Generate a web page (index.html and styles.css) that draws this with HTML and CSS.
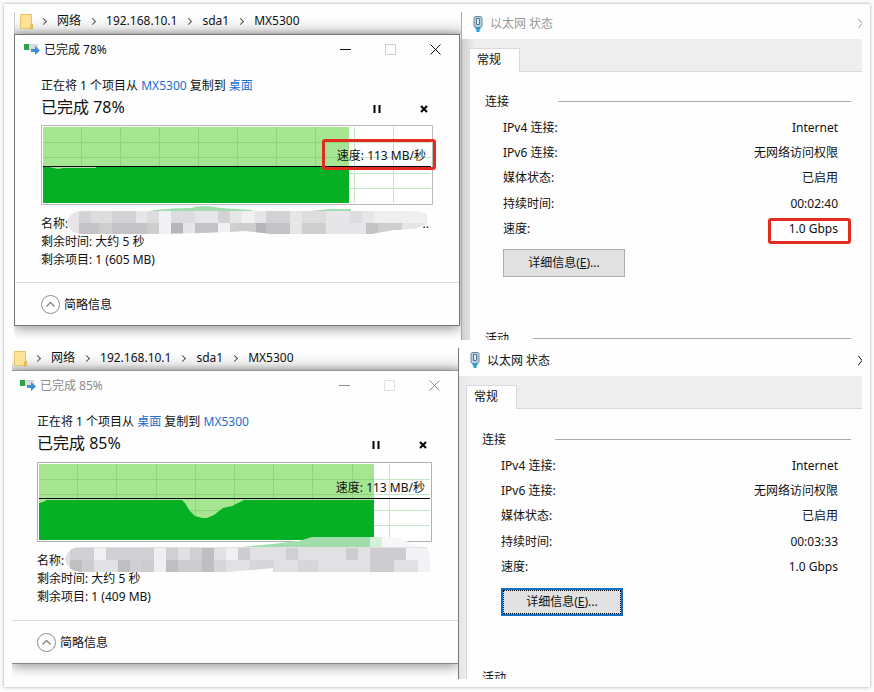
FILE: index.html
```html
<!DOCTYPE html>
<html lang="zh-CN">

<head>
    <meta charset="UTF-8">
    <meta name="viewport" content="width=device-width, initial-scale=1.0">
    <title>MX5300 传输速度</title>
    <link rel="stylesheet" href="styles.css">
</head>

<body>
    <svg class="defs" width="0" height="0">
        <symbol id="folder" viewBox="0 0 14 17">
            <path d="M0 1h12v10h1v5H0z" fill="#fbdd84"/>
            <path d="M.5 1.500h11v14h-11z" fill="#fde397" stroke="#e6c364"/>
            <path d="M10.500 12v4h2v-5z" fill="#f2cc62" stroke="#dcb650"/>
        </symbol>
        <symbol id="copy" viewBox="0 0 16 12">
            <path d="M5 1h9v6H5z" fill="#d5dde2"/>
            <path d="M0 1h5v6H0z" fill="#35a04a"/>
            <path d="M7 6h4V3l5 4.500-5 4.500V9H7z" fill="#3a8fdc"/>
        </symbol>
        <symbol id="plug" viewBox="0 0 10 16">
            <rect x="1" y=".5" width="8" height="11" rx="2" fill="#b8cedd" stroke="#68899f"/>
            <path d="M3.500 2.500v6h3v-6z" fill="#dcebf4" stroke="#54798f"/>
            <path d="M2.500 11.500h5v2h-1V16h-3v-2.500h-1z" fill="#2b9bd0"/>
        </symbol>
        <symbol id="min" viewBox="0 0 11 11"><path d="M0 5.500h11" stroke="currentColor"/></symbol>
        <symbol id="max" viewBox="0 0 11 11"><path d="M.5.5h10v10H.5z" fill="none" stroke="currentColor"/></symbol>
        <symbol id="close" viewBox="0 0 11 11"><path d="M.5.5l10 10m0-10l-10 10" stroke="currentColor"/></symbol>
        <symbol id="half-close" viewBox="0 0 4 11"><path d="M0 .5l4 5-4 5" fill="none" stroke="currentColor"/></symbol>
        <symbol id="pause" viewBox="0 0 8 8"><path d="M1.500 0v8m5-8v8" stroke="#000" stroke-width="2"/></symbol>
        <symbol id="cancel" viewBox="0 0 8 8"><path d="M1 1l6 6m0-6L1 7" stroke="#000" stroke-width="2"/></symbol>
        <symbol id="less" viewBox="0 0 19 19">
            <circle cx="9.500" cy="9.500" r="9" fill="#fff" stroke="#8c8c8c"/>
            <path d="M5.500 11.500l4-4 4 4" fill="none" stroke="#8c8c8c" stroke-width="1.500"/>
        </symbol>
    </svg>

    <main class="sheet">
        <section class="shot shot-first">
            <div class="desk">
                <nav class="path">
                    <svg class="folder"><use href="#folder"/></svg>
                    <span class="sep"></span>
                    <span>网络</span>
                    <span class="sep"></span>
                    <span>192.168.10.1</span>
                    <span class="sep"></span>
                    <span>sda1</span>
                    <span class="sep"></span>
                    <span>MX5300</span>
                </nav>
                <div class="dialog">
                    <header class="caption">
                        <svg class="copy"><use href="#copy"/></svg>
                        <span class="caption-text">已完成 78%</span>
                        <button class="win-btn" aria-label="最小化"><svg><use href="#min"/></svg></button>
                        <button class="win-btn" aria-label="最大化" disabled><svg><use href="#max"/></svg></button>
                        <button class="win-btn" aria-label="关闭"><svg><use href="#close"/></svg></button>
                    </header>
                    <div class="job">
                        <p class="what">正在将 1 个项目从 <a href="#">MX5300</a> 复制到 <a href="#">桌面</a></p>
                        <div class="status">
                            <h2>已完成 78%</h2>
                            <button aria-label="暂停"><svg><use href="#pause"/></svg></button>
                            <button aria-label="取消"><svg><use href="#cancel"/></svg></button>
                        </div>
                        <div class="chart">
                            <svg viewBox="0 0 392 80" preserveAspectRatio="none">
                                <path d="M.5.5h391v79H.5z" fill="#fff" stroke="#b9b9b9"/>
                                <path d="M40.500 2v76M79.500 2v76M118.500 2v76M157.500 2v76M196.500 2v76M235.500 2v76M274.500 2v76M313.500 2v76M352.500 2v76M2 17.500h388M2 32.500h388M2 48.500h388M2 63.500h388" stroke="#c3e6c8"/>
                                <path d="M2 2h306v76H2z" fill="#a6e591"/>
                                <path d="M40.500 2v39M79.500 2v39M118.500 2v39M157.500 2v39M196.500 2v39M235.500 2v39M274.500 2v39M2 17.500h306M2 32.500h306" stroke="#8cd57d"/>
                                <path d="M2 41h306v37H2z" fill="#06b025"/>
                                <path d="M8 42h47v1H22l-5 1z" fill="#a6e591"/>
                                <path d="M2 41.500h388" stroke="#000"/>
                            </svg>
                            <span class="rate marked">速度: 113 MB/秒</span>
                        </div>
                        <div class="info">
                            <div class="name">
                                <span>名称:</span>
                                <span>..</span>
                                <svg class="smudge" viewBox="0 0 392 40" preserveAspectRatio="none">
                                    <clipPath id="brush-a"><path d="M26 23Q29 12 42 12H372L386 15V25L374 30L352 31L330 35H230L205 32L160 34L110 35H40Q28 34 26 23z"/></clipPath>
                                    <path d="M102 13Q122 9 150 9Q160 5 180 9L211 11V14zM270 12l18-2h22v3z" fill="#9fdcae"/>
                                    <g clip-path="url(#brush-a)">
                                        <path d="M26 12h360v24H26z" fill="#e6e6e8"/>
                                        <path d="M38 12h12v12H38zM71 12h24v12H71zM177 12h12v12h-12zM225 12h12v12h-12zM237 12h12v12h-12z" fill="#d3d3d5"/>
                                        <path d="M50 12h21v12H50zM106 12h12v12h-12zM130 12h24v12h-24zM261 12h24v12h-24zM309 12h12v12h-12z" fill="#dddde0"/>
                                        <path d="M118 12h12v24h-12zM177 24h12v12h-12zM201 12h12v12h-12z" fill="#f1f1f3"/>
                                        <path d="M38 24h20v12H38zM71 24h35v12H71zM154 24h23v12h-23zM225 24h12v12h-12zM237 24h12v12h-12zM325 24h12v12h-12z" fill="#c3c3c5"/>
                                        <path d="M58 24h13v12H58zM106 24h12v12h-12zM189 24h26v12h-26zM261 24h24v12h-24zM337 24h24v12h-24z" fill="#cecece"/>
                                        <path d="M130 24h12v12h-12zM215 24h10v12h-10z" fill="#b6b6b8"/>
                                        <path d="M333 12h53v12h-53z" fill="#efeff1"/>
                                    </g>
                                </svg>
                            </div>
                            <div>剩余时间: 大约 5 秒</div>
                            <div>剩余项目: 1 (605 MB)</div>
                        </div>
                    </div>
                    <footer class="fold">
                        <button><svg><use href="#less"/></svg>简略信息</button>
                    </footer>
                </div>
            </div>
            <div class="net">
                <header class="net-title">
                    <svg class="plug"><use href="#plug"/></svg>
                    <span>以太网 状态</span>
                    <button aria-label="关闭"><svg><use href="#half-close"/></svg></button>
                </header>
                <div class="tabs"><button>常规</button></div>
                <div class="page">
                    <h3>连接</h3>
                    <table>
                        <tr><th scope="row">IPv4 连接:</th><td>Internet</td></tr>
                        <tr><th scope="row">IPv6 连接:</th><td>无网络访问权限</td></tr>
                        <tr><th scope="row">媒体状态:</th><td>已启用</td></tr>
                        <tr><th scope="row">持续时间:</th><td>00:02:40</td></tr>
                        <tr><th scope="row">速度:</th><td class="speed">1.0 Gbps</td></tr>
                    </table>
                    <button class="details">详细信息(<u>E</u>)...</button>
                    <h3 class="cut">活动</h3>
                </div>
            </div>
        </section>

        <section class="shot shot-second">
            <div class="desk">
                <nav class="path">
                    <svg class="folder"><use href="#folder"/></svg>
                    <span class="sep"></span>
                    <span>网络</span>
                    <span class="sep"></span>
                    <span>192.168.10.1</span>
                    <span class="sep"></span>
                    <span>sda1</span>
                    <span class="sep"></span>
                    <span>MX5300</span>
                </nav>
                <div class="dialog">
                    <header class="caption">
                        <svg class="copy"><use href="#copy"/></svg>
                        <span class="caption-text">已完成 85%</span>
                        <button class="win-btn" aria-label="最小化"><svg><use href="#min"/></svg></button>
                        <button class="win-btn" aria-label="最大化" disabled><svg><use href="#max"/></svg></button>
                        <button class="win-btn" aria-label="关闭"><svg><use href="#close"/></svg></button>
                    </header>
                    <div class="job">
                        <p class="what">正在将 1 个项目从 <a href="#">桌面</a> 复制到 <a href="#">MX5300</a></p>
                        <div class="status">
                            <h2>已完成 85%</h2>
                            <button aria-label="暂停"><svg><use href="#pause"/></svg></button>
                            <button aria-label="取消"><svg><use href="#cancel"/></svg></button>
                        </div>
                        <div class="chart">
                            <svg viewBox="0 0 395 80" preserveAspectRatio="none">
                                <path d="M.5.5h394v79H.5z" fill="#fff" stroke="#b0b0b0"/>
                                <path d="M352.500 2v76M2 17.500h391M2 32.500h391M2 48.500h391M2 63.500h391" stroke="#c3e6c8"/>
                                <path d="M2 2h335v76H2z" fill="#a6e591"/>
                                <path d="M40.500 2v76M79.500 2v76M119.500 2v76M158.500 2v76M197.500 2v76M236.500 2v76M275.500 2v76M315.500 2v76M2 17.500h335M2 32.500h335M2 48.500h335" stroke="#8cd57d"/>
                                <path d="M2 41l4-1 4-2h135l3 3 4 7 6 6 7 2h5l7-3 9-7 9-2 12-6h130v40H2z" fill="#06b025"/>
                                <path d="M2 36.500h391" stroke="#000"/>
                            </svg>
                            <span class="rate">速度: 113 MB/秒</span>
                        </div>
                        <div class="info">
                            <div class="name">
                                <span>名称:</span>
                                <svg class="smudge" viewBox="0 0 395 40" preserveAspectRatio="none">
                                    <path d="M190 12L235 8 262 5 280 1h60l22 1 14 6 10 8v18h-80z" fill="#f7f7f9"/>
                                    <path d="M185 13L235 8 262 5 275 1h58v12z" fill="#a0dfab"/>
                                    <path d="M333 1h12v11h-12z" fill="#d3f0d8"/>
                                    <clipPath id="brush-b"><path d="M28 23Q31 11 44 11H390Q394 22 393 36H236V32L190 36H44Q30 35 28 23z"/></clipPath>
                                    <g clip-path="url(#brush-b)">
                                        <path d="M28 11h365v26H28z" fill="#e1e1e3"/>
                                        <path d="M33 12h24v12H33zM69 12h24v12H69zM93 12h24v24H93zM129 12h12v12h-12zM153 12h12v12h-12zM249 12h12v12h-12z" fill="#d0d0d4"/>
                                        <path d="M33 24h12v12H33zM81 24h12v12H81zM129 24h12v12h-12zM165 12h12v24h-12z" fill="#bfbfc1"/>
                                        <path d="M45 24h12v12H45zM105 24h12v12h-12zM141 24h24v12h-24zM201 12h12v12h-12zM333 12h36v12h-36zM333 24h24v12h-24zM309 12h12v12h-12z" fill="#cdcdcf"/>
                                        <path d="M57 12h12v12H57zM117 12h12v24h-12zM189 12h12v12h-12z" fill="#f0f0f3"/>
                                        <path d="M177 24h12v12h-12zM213 24h24v12h-24zM261 24h20v12h-20z" fill="#d7d7d9"/>
                                        <path d="M369 12h24v12h-24zM381 24h12v12h-12z" fill="#f1f1f6"/>
                                    </g>
                                </svg>
                            </div>
                            <div>剩余时间: 大约 5 秒</div>
                            <div>剩余项目: 1 (409 MB)</div>
                        </div>
                    </div>
                    <footer class="fold">
                        <button><svg><use href="#less"/></svg>简略信息</button>
                    </footer>
                </div>
            </div>
            <div class="net">
                <header class="net-title">
                    <svg class="plug"><use href="#plug"/></svg>
                    <span>以太网 状态</span>
                    <button aria-label="关闭"><svg><use href="#half-close"/></svg></button>
                </header>
                <div class="tabs"><button>常规</button></div>
                <div class="page">
                    <h3>连接</h3>
                    <table>
                        <tr><th scope="row">IPv4 连接:</th><td>Internet</td></tr>
                        <tr><th scope="row">IPv6 连接:</th><td>无网络访问权限</td></tr>
                        <tr><th scope="row">媒体状态:</th><td>已启用</td></tr>
                        <tr><th scope="row">持续时间:</th><td>00:03:33</td></tr>
                        <tr><th scope="row">速度:</th><td>1.0 Gbps</td></tr>
                    </table>
                    <button class="details focused">详细信息(<u>E</u>)...</button>
                    <h3 class="cut">活动</h3>
                </div>
            </div>
        </section>
    </main>
</body>

</html>
```
FILE: styles.css
```css
*,
*::before,
*::after {
    box-sizing: border-box;
}

body {
    margin: 0;
    padding: 4px;
    background-color: #fbfbfb;
    color: #111;
    font-family: "Noto Sans", "Noto Sans CJK SC", sans-serif;
    font-size: 12px;
    line-height: 18px;
}

h2,
h3,
p {
    margin: 0;
    font-weight: normal;
}

a {
    color: #1a6fd0;
    text-decoration: none;
}

button {
    padding: 0;
    border: none;
    background: none;
    color: inherit;
    font: inherit;
}

svg {
    display: block;
    flex: none;
}

.defs {
    position: absolute;
}

.sheet {
    display: grid;
    gap: 8px;
    padding: 8px;
    background-color: #fefefe;
    box-shadow: 0 0 3px rgba(0, 0, 0, 0.35);
}

.shot {
    display: grid;
    overflow: hidden;
}

.shot-first {
    --path-left: 5px;
    --gutter: 26px;
    --chart-top: 6px;
    --info-bottom: 13px;
    --title-height: 27px;
    --group-top: 20px;
    --button-top: 7px;
    --label-left: 33px;
    grid-template-columns: minmax(0, 447fr) minmax(0, 401fr);
    padding-left: 2px;
}

.shot-second {
    --path-left: 2px;
    --gutter: 25px;
    --chart-top: 7px;
    --info-bottom: 14px;
    --title-height: 28px;
    --group-top: 21px;
    --button-top: 8px;
    --label-left: 34px;
    grid-template-columns: minmax(0, 446fr) minmax(0, 404fr);
}

/* Explorer window behind the copy dialog */

.desk {
    overflow: hidden;
}

.path {
    display: flex;
    align-items: center;
    height: 22px;
    padding: 0 0 4px var(--path-left);
    background: linear-gradient(#fefefe 20%, #f0f0f0 75%, #d4d4d4);
    white-space: nowrap;
}

.shot-first .path {
    border-left: 1px solid #ccc;
}

.shot-second .path {
    padding-bottom: 2px;
}

.folder {
    width: 14px;
    height: 17px;
    margin-right: -2px;
}

.sep {
    display: flex;
    justify-content: center;
    width: 25px;
    padding-right: 2px;
}

.sep::before {
    content: "";
    width: 5px;
    height: 5px;
    border: solid #555;
    border-width: 1px 1px 0 0;
    transform: rotate(45deg);
}

/* Copy dialog */

.dialog {
    border-top: 1px solid #999;
    border-bottom: 1px solid #888;
    background-color: #fefefe;
    box-shadow: 0 2px 12px rgba(0, 0, 0, 0.45);
}

.shot-first .dialog {
    margin-right: 1px;
    border: 1px solid #777;
}

.caption {
    display: flex;
    align-items: center;
    height: 28px;
    padding: 0 1px 0 9px;
}

.shot-second .caption {
    padding-left: 8px;
    color: #8c8c8c;
}

.copy {
    width: 16px;
    height: 12px;
    margin-right: 4px;
}

.caption-text {
    flex: 1;
    padding-top: 2px;
}

.win-btn {
    display: flex;
    justify-content: center;
    width: 45px;
}

.win-btn svg {
    width: 11px;
    height: 11px;
}

.win-btn:disabled {
    color: #ccc;
}

.shot-second .win-btn:disabled {
    color: #e0e0e0;
}

.job {
    padding: 13px 26px var(--info-bottom) var(--gutter);
}

.what {
    line-height: 20px;
}

.status {
    display: flex;
    align-items: center;
    gap: 29px;
    height: 23px;
}

.status h2 {
    flex: 1;
    font-size: 16px;
    line-height: 23px;
}

.status button {
    display: flex;
    justify-content: center;
    width: 18px;
    padding-top: 2px;
}

.status svg {
    width: 8px;
    height: 8px;
}

.chart {
    position: relative;
    margin-top: var(--chart-top);
}

.chart svg {
    width: 100%;
    height: 80px;
}

.rate {
    position: absolute;
    top: 17px;
    right: 7px;
}

.rate.marked {
    top: 14px;
    right: -3px;
    padding: 5px 7px 2px 12px;
    border: 3px solid #e32b20;
    border-radius: 3px;
}

.info {
    margin-top: 10px;
}

.name {
    position: relative;
    display: flex;
    justify-content: space-between;
    padding-right: 4px;
}

/* Brushed-out file name */

.smudge {
    position: absolute;
    top: -16px;
    left: 0;
    width: 100%;
    height: 40px;
}

.fold {
    display: flex;
    align-items: center;
    height: 43px;
    padding: 1px 0 0 var(--gutter);
    border-top: 1px solid #ddd;
}

.fold button {
    display: flex;
    align-items: center;
    gap: 4px;
}

.fold svg {
    width: 19px;
    height: 19px;
}

/* Ethernet status window */

.net {
    position: relative;
    border-left: 1px solid #777;
    background: linear-gradient(90deg, #e4e4e4, #eee 8px);
}

.shot-first .net {
    border-left-color: #aaa;
    background: linear-gradient(90deg, #cfcfcf, #eee 12px);
}

.net-title {
    display: flex;
    align-items: center;
    height: var(--title-height);
    padding: 0 0 4px 11px;
    background-color: #fefefe;
}

.shot-first .net-title {
    color: #999;
}

.plug {
    width: 10px;
    height: 16px;
    margin-right: 7px;
}

.net-title span {
    flex: 1;
    padding-top: 1px;
}

.net-title button svg {
    width: 4px;
    height: 11px;
}

.tabs {
    display: flex;
    height: 33px;
    margin-left: 7px;
    padding-top: 9px;
    box-shadow: inset 0 -1px #d9d9d9;
}

.tabs button {
    width: 51px;
    padding: 0 12px 2px 7px;
    border: 1px solid #d9d9d9;
    border-bottom: none;
    background-color: #fefefe;
    text-align: left;
}

.page {
    margin-left: 7px;
    padding: var(--group-top) 11px 0 0;
    border-left: 1px solid #d9d9d9;
    background-color: #fefefe;
}

.page h3 {
    display: flex;
    height: 20px;
    padding-left: 15px;
    font-size: 12px;
    line-height: 20px;
}

.page h3::after {
    content: "";
    flex: 1;
    height: 1px;
    margin: 9px 0 0 49px;
    background-color: #aaa;
}

.page table {
    width: 100%;
    height: 127px;
    margin-top: 3px;
    border-collapse: collapse;
}

.page th {
    padding: 0 0 0 var(--label-left);
    font-weight: normal;
    text-align: left;
}

.page td {
    position: relative;
    padding: 0 13px 0 0;
    text-align: right;
}

.speed::after {
    content: "";
    position: absolute;
    top: 1px;
    right: 0;
    width: 83px;
    height: 26px;
    border: 3px solid #e32b20;
    border-radius: 3px;
}

.details {
    display: block;
    width: 122px;
    height: 28px;
    margin: var(--button-top) 0 0 var(--label-left);
    border: 1px solid #adadad;
    background-color: #e1e1e1;
}

.details.focused {
    border: 2px solid #0f6fc0;
    outline: 1px dotted #000;
    outline-offset: -3px;
}

.page .cut {
    height: 11px;
    margin-top: 52px;
    overflow: hidden;
}

.shot-first .cut::after {
    margin-left: 24px;
}

.shot-second .cut::after {
    display: none;
}
```
